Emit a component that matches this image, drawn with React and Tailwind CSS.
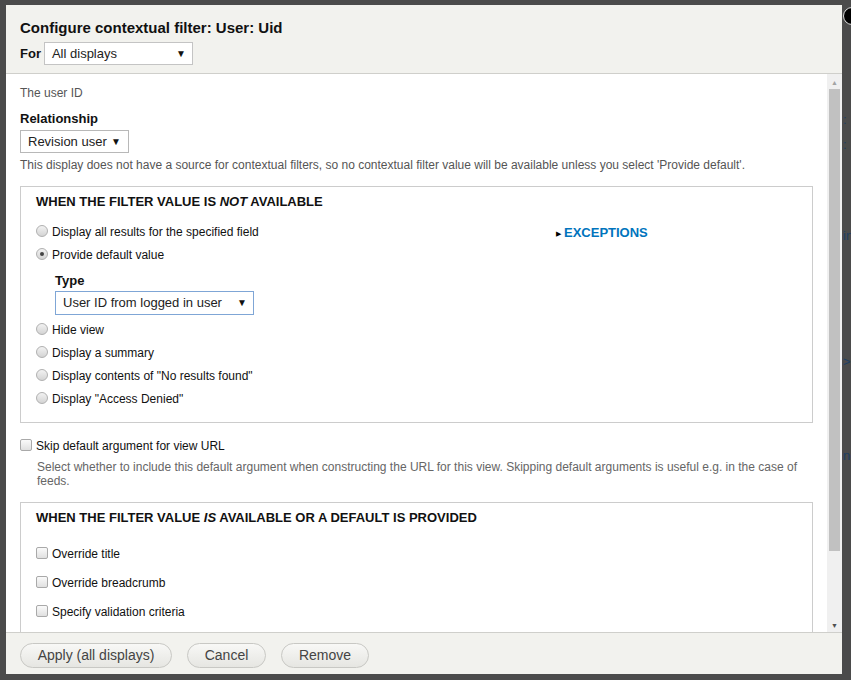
import React from 'react'

const font = { fontFamily: '"Liberation Sans", Arial, sans-serif' }

function Radio({ checked, label }) {
  return (
    <div className="flex items-center h-4">
      <span className="relative w-[12px] h-[12px] rounded-full border border-[#b0b0b0] bg-gradient-to-b from-[#f2f2f2] to-[#d4d4d4] mr-[4px] -mt-[3px] flex items-center justify-center shrink-0">
        {checked && <span className="w-[4px] h-[4px] rounded-full bg-[#444]" />}
      </span>
      <span className="text-[12px] text-[#111]">{label}</span>
    </div>
  )
}

function Check({ label }) {
  return (
    <div className="flex items-center h-4">
      <span className="w-[12px] h-[12px] rounded-[2px] border border-[#a9a9a9] bg-gradient-to-b from-[#fafafa] to-[#e0e0e0] mr-[4px] -mt-[3px] shrink-0" />
      <span className="text-[12px] text-[#111]">{label}</span>
    </div>
  )
}

function Select({ label, className }) {
  return (
    <div className={'flex items-center justify-between bg-white border text-[13px] text-[#222] ' + className}>
      <span>{label}</span>
      <span className="text-[10px] leading-none text-[#111]">▼</span>
    </div>
  )
}

function Button({ children, className }) {
  return (
    <div className={'h-[25px] flex items-center justify-center rounded-full border border-[#c8c8c4] bg-gradient-to-b from-[#f8f8f6] to-[#e6e6e2] text-[14px] text-[#444] ' + className}>
      {children}
    </div>
  )
}

export default function App() {
  return (
    <div className="relative w-[851px] h-[680px] bg-[#4b4b4b] overflow-hidden flex" style={font}>
      <div className="w-[6px] shrink-0" />
      <div className="mt-[5px] w-[836px] h-[669px] shrink-0 flex flex-col bg-white">
        {/* header */}
        <div className="h-[69px] bg-[#f2f2ee] border-b border-[#cfcfcb] px-[14px] pt-[14px]">
          <div className="text-[15px] leading-[18px] font-bold text-[#111]">Configure contextual filter: User: Uid</div>
          <div className="flex items-center mt-[5px]">
            <span className="text-[13px] font-bold text-[#111] mr-[3px]">For</span>
            <Select label="All displays" className="w-[149px] h-[23px] border-[#c4c4c4] pl-[7px] pr-[6px]" />
          </div>
        </div>

        {/* body */}
        <div className="flex flex-1 min-h-0">
          <div className="flex-1 overflow-hidden pl-[14px] pr-[14px] pt-[11px] text-[#111]">
            <div className="text-[12px] leading-4 text-[#555]">The user ID</div>
            <div className="mt-[10px] text-[13px] leading-4 font-bold">Relationship</div>
            <Select label="Revision user" className="mt-[3px] w-[109px] h-[23px] border-[#b8b8b8] pl-[7px] pr-[7px]" />
            <div className="mt-[4px] text-[12px] leading-4 text-[#555]">
              This display does not have a source for contextual filters, so no contextual filter value will be available unless you select 'Provide default'.
            </div>

            <div className="mt-[13px] border border-[#ccc] pl-[15px] pt-[7px] pb-[15px]">
              <div className="text-[13px] leading-4 font-bold">WHEN THE FILTER VALUE IS <i>NOT</i> AVAILABLE</div>
              <div className="flex">
                <div className="w-[520px] mt-[14px] flex flex-col gap-[7px]">
                  <Radio label="Display all results for the specified field" />
                  <Radio checked label="Provide default value" />
                  <div className="pl-[19px] mt-[3px]">
                    <div className="text-[13px] leading-4 font-bold">Type</div>
                    <Select label="User ID from logged in user" className="mt-[2px] w-[199px] h-[24px] border-[#7fa6d6] pl-[7px] pr-[6px]" />
                  </div>
                  <Radio label="Hide view" />
                  <Radio label="Display a summary" />
                  <Radio label='Display contents of "No results found"' />
                  <Radio label='Display "Access Denied"' />
                </div>
                <div className="mt-[15px] flex items-center h-4">
                  <span className="text-[7px] leading-none text-black mr-[3px]">▶</span>
                  <span className="text-[13px] font-bold text-[#0074bd]">EXCEPTIONS</span>
                </div>
              </div>
            </div>

            <div className="mt-[15px]">
              <Check label="Skip default argument for view URL" />
            </div>
            <div className="mt-[6px] pl-[17px] text-[12px] leading-[14px] text-[#666]">
              Select whether to include this default argument when constructing the URL for this view. Skipping default arguments is useful e.g. in the case of feeds.
            </div>

            <div className="mt-[14px] border border-[#ccc] pl-[15px] pt-[7px] pb-[15px]">
              <div className="text-[13px] leading-4 font-bold">WHEN THE FILTER VALUE <i>IS</i> AVAILABLE OR A DEFAULT IS PROVIDED</div>
              <div className="mt-[20px] flex flex-col gap-[13px]">
                <Check label="Override title" />
                <Check label="Override breadcrumb" />
                <Check label="Specify validation criteria" />
              </div>
            </div>
          </div>

          {/* scrollbar */}
          <div className="w-[15px] shrink-0 bg-[#f0f0f0] flex flex-col items-center">
            <div className="mt-[5px] text-[7px] leading-none text-[#a3a3a3]">▲</div>
            <div className="mt-[3px] w-[11px] h-[462px] bg-[#c1c1c1]" />
            <div className="mt-auto mb-[3px] text-[7px] leading-none text-[#505050]">▼</div>
          </div>
        </div>

        {/* footer */}
        <div className="h-[42px] bg-[#f2f2ee] border-t border-[#cfcfcb] flex items-start pt-[10px] pl-[14px] gap-[15px]">
          <Button className="w-[152px]">Apply (all displays)</Button>
          <Button className="w-[79px]">Cancel</Button>
          <Button className="w-[88px]">Remove</Button>
        </div>
      </div>

      {/* page behind, right edge */}
      <div className="flex-1 min-w-0 flex flex-col pt-[112px] pl-[1px] text-[13px] leading-4 text-[#1d3f63] whitespace-nowrap">
        <span>:</span>
        <span className="mt-[9px]">:</span>
        <span className="mt-[75px]">in</span>
        <span className="mt-[110px]">&gt;</span>
        <span className="mt-[78px]">ng</span>
      </div>

      <div className="absolute left-[843px] top-[7px] w-[18px] h-[18px] rounded-full bg-black border border-[#ddd]" />
    </div>
  )
}
